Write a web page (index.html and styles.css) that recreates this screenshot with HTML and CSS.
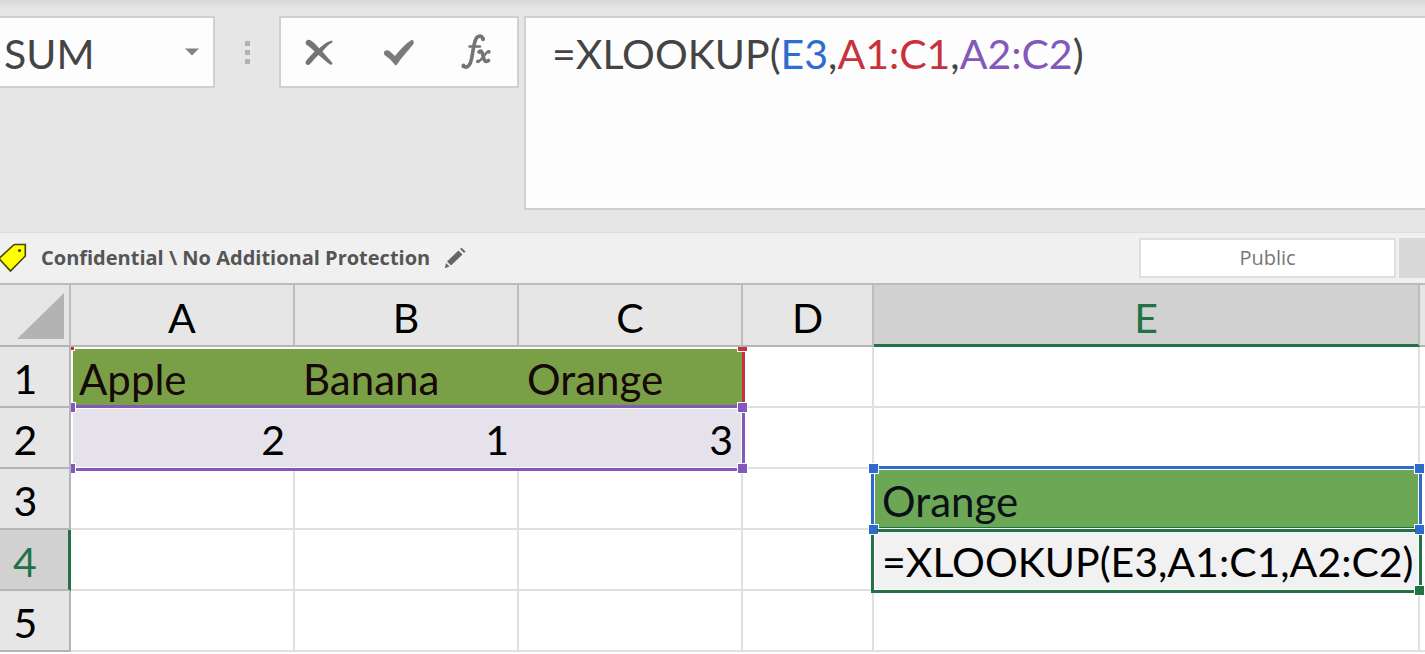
FILE: index.html
```html
<!DOCTYPE html>
<html lang="en">
<head>
<meta charset="utf-8">
<title>XLOOKUP</title>
<link rel="stylesheet" href="styles.css">
</head>
<body>
<header class="formula-bar">
  <div class="name-box">
    <input class="name-input" type="text" value="SUM" aria-label="Name box">
    <button class="name-toggle" type="button" aria-label="Show names">
      <svg width="14" height="8" viewBox="0 0 14 8"><path d="M0 0.5H14L7 7.5Z" fill="#808383"/></svg>
    </button>
  </div>
  <div class="grip" aria-hidden="true"><i></i><i></i><i></i></div>
  <div class="actions">
    <button type="button" aria-label="Cancel">
      <svg width="30" height="28" viewBox="0 0 30 28"><path d="M3.500 2C7 1 11 6 15.300 10.500C19 6.500 24 3.200 28 2.500L28.700 4.300C24.500 6.500 21.500 9.500 18.500 13.500C22.500 18.500 26 21.500 28.700 25.500L27 27C23 24.500 19 20.500 14.500 17C11 20 8.500 23.500 5.500 26.500C3 27.800 .8 26 1.800 23.500C4 20 7.500 17 10.500 13.500C8 10.500 5 8.500 2.200 6.500C1 5 1.800 2.800 3.500 2Z" fill="#747474"/></svg>
    </button>
    <button type="button" aria-label="Enter">
      <svg width="32" height="28" viewBox="0 0 32 28"><path d="M1 14.500C1.500 12 4.500 11.500 6.500 13L12 18C17 12 22 6 28.500 2C30.500 1.500 31 3.500 30.500 6C25 12.500 19 19 14 26.500C13.500 27.500 12 27.500 11.500 26.500C8.500 22 5 19.500 1.500 17C1 16.300 .8 15.500 1 14.500Z" fill="#7b7b7b"/></svg>
    </button>
    <button class="fx" type="button" aria-label="Insert function">
      <svg width="30" height="36" viewBox="0 0 30 36" fill="none" stroke="#747474" stroke-linecap="round"><path d="M22 4.500C20 .8 16 1.500 14.500 6C12.500 11 12 18 10.500 25C9.500 31 6.500 34.500 2.500 32.500" stroke-width="3.600"/><path d="M8.500 12.500H19" stroke-width="2.400"/><path d="M22 5v.2M2.500 31.500v.2" stroke-width="4"/><path d="M18 18C20.500 16 21 18 22 21.500C23 26 24 29 27.500 26.500" stroke-width="3.600"/><path d="M28 17.500C24.500 16.500 21.500 27.500 16.500 27.500" stroke-width="2.400"/><path d="M27.800 17.800v.2M17 27.300v.2" stroke-width="3.600"/></svg>
    </button>
  </div>
  <div class="formula" role="textbox" aria-label="Formula" contenteditable="true" spellcheck="false">=XLOOKUP(<span class="ref-blue">E3</span>,<span class="ref-red">A1:C1</span>,<span class="ref-purple">A2:C2</span>)</div>
</header>

<section class="label-bar" aria-label="Sensitivity">
  <svg class="tag" width="27" height="30" viewBox="0 0 27 30"><path d="M-1 15.500L13 2.500Q14 1.500 15.500 1.500H25.300V13L10.500 28Z" fill="#ff0" stroke="#44440c" stroke-width="1.600"/><circle cx="19.500" cy="7.500" r="1.600" fill="#44440c"/></svg>
  <span class="label-name">Confidential \ No Additional Protection</span>
  <button class="edit" type="button" aria-label="Edit label">
    <svg width="22" height="22" viewBox="0 0 22 22" fill="#666"><path d="M14.500 3.500L18.500 7.500L7 18.500L3 14.500Z"/><path d="M16 2L17.500 .8L21.500 4.500L20 6Z"/><path d="M2 16L5.500 19.500L.8 21.200Z"/></svg>
  </button>
  <div class="label-options">
    <button class="option" type="button">Public</button>
    <button class="option option-next" type="button" aria-label="Next label"></button>
  </div>
</section>

<main class="sheet">
  <table class="cells">
    <colgroup><col class="c-head"><col class="c-wide"><col class="c-wide"><col class="c-wide"><col class="c-mid"><col><col class="c-rest"></colgroup>
    <thead>
      <tr><th class="corner"><svg width="47" height="46" viewBox="0 0 47 46"><path d="M47 0V46H0Z" fill="#b3b3b3"/></svg></th><th>A</th><th>B</th><th>C</th><th>D</th><th class="active">E</th><th></th></tr>
    </thead>
    <tbody>
      <tr><th>1</th><td class="olive">Apple</td><td class="olive">Banana</td><td class="olive">Orange</td><td></td><td></td><td></td></tr>
      <tr><th>2</th><td class="lilac">2</td><td class="lilac">1</td><td class="lilac">3</td><td></td><td></td><td></td></tr>
      <tr><th>3</th><td></td><td></td><td></td><td></td><td class="green">Orange</td><td></td></tr>
      <tr><th class="active">4</th><td></td><td></td><td></td><td></td><td class="editing">=XLOOKUP(E3,A1:C1,A2:C2)</td><td></td></tr>
      <tr><th>5</th><td></td><td></td><td></td><td></td><td></td><td></td></tr>
    </tbody>
  </table>
  <div class="marks" aria-hidden="true">
    <div class="mark mark-red"><i class="tl"></i><i class="tr"></i></div>
    <div class="mark mark-edit"><i class="br"></i></div>
    <div class="mark mark-purple"><i class="tl"></i><i class="tr"></i><i class="bl"></i><i class="br"></i></div>
    <div class="mark mark-blue"><i class="tl"></i><i class="tr"></i><i class="bl"></i><i class="br"></i></div>
  </div>
</main>
</body>
</html>
```
FILE: styles.css
```css
* { box-sizing: border-box; }
body {
  margin: 0;
  background: #fff;
  color: #000;
  font-family: Lato, "Liberation Sans", sans-serif;
  font-size: 41px;
  line-height: 48px;
  overflow: hidden;
}
button { border: 0; padding: 0; background: none; font: inherit; color: inherit; }
svg { display: block; }

/* Formula bar */
.formula-bar {
  display: flex;
  align-items: flex-start;
  padding: 16px 0 22px;
  background: linear-gradient(#d8d8d8, #e6e6e6 10px);
  color: #444;
}
.name-box {
  display: flex;
  width: 215px;
  height: 72px;
  background: #fdfdfd;
  border: 2px solid #d0d0d0;
  border-left: 0;
}
.name-input {
  flex: 1;
  min-width: 0;
  border: 0;
  padding: 4px 0 0 4px;
  background: none;
  font: inherit;
  color: inherit;
  outline: 0;
}
.name-toggle { display: grid; place-items: center; width: 42px; }
.grip {
  display: grid;
  gap: 4px;
  align-content: center;
  justify-content: center;
  width: 64px;
  height: 72px;
}
.grip i { width: 5px; height: 5px; background: #b2b2b2; }
.actions {
  display: grid;
  grid-template-columns: repeat(3, 80px);
  justify-content: center;
  width: 240px;
  height: 72px;
  background: #fdfdfd;
  border: 2px solid #d0d0d0;
}
.actions button { display: grid; place-items: center; }
.actions .fx { padding-right: 6px; }
.formula {
  flex: 1;
  min-width: 0;
  height: 194px;
  margin-left: 5px;
  padding: 12px 26px;
  background: #fdfdfd;
  border: 2px solid #d0d0d0;
  border-right: 0;
  white-space: nowrap;
}
.ref-blue { color: #2f6cd0; }
.ref-red { color: #c8323c; }
.ref-purple { color: #8358bd; }

/* Sensitivity bar */
.label-bar {
  display: flex;
  align-items: center;
  height: 53px;
  background: #f0f0f0;
  border-top: 1px solid #dcdcdc;
  border-bottom: 2px solid #b8bcc2;
  color: #555;
  font: 700 20px/28px "Open Sans", "Noto Sans", sans-serif;
}
.label-name { margin-left: 14px; white-space: nowrap; }
.edit { margin-left: 14px; }
.label-options {
  display: flex;
  gap: 3px;
  height: 40px;
  margin-left: auto;
}
.option {
  width: 257px;
  background: #fff;
  border: 2px solid #dedede;
  color: #777;
  font-weight: 400;
  font-size: 20px;
}
.option-next { width: 26px; background: #d8d8d8; border: 0; }

/* Grid */
.sheet { position: relative; }
.cells {
  width: 100%;
  table-layout: fixed;
  border-spacing: 0;
}
.c-head { width: 71px; }
.c-wide { width: 224px; }
.c-mid { width: 131px; }
.c-rest { width: 5px; }
.cells th, .cells td {
  height: 61px;
  padding: 4px 8px 0;
  border-right: 2px solid #e0e0e0;
  border-bottom: 2px solid #e0e0e0;
  font-weight: 400;
  text-align: left;
  white-space: nowrap;
}
.cells th {
  padding: 4px 0 0;
  background: #e6e6e6;
  border-color: #b5b5b5;
  text-align: center;
}
.cells thead th { height: 62px; padding-top: 5px; border-right-color: #bdbdbd; }
.cells tbody th { padding-right: 18px; }
.cells thead .corner { padding: 2px 0 0 17px; }
.cells th.active { background: #d1d1d1; color: #217346; }
.cells thead .active { padding-top: 6px; border-bottom: 3px solid #217346; }
.cells tbody .active { border-right: 3px solid #217346; }
.cells td:last-child, .cells th:last-child { padding: 0; border-right: 0; }
.cells .olive { background: #7aa047; border-color: #7aa047; color: #180808; font-size: 42px; }
.cells .lilac { background: #e5e2ec; border-color: #e5e2ec; text-align: right; }
.cells .green { background: #6ba755; color: #0c1018; font-size: 42px; }
.cells .editing { background: #f1f1f1; }

/* Range outlines drawn over the grid */
.marks {
  position: absolute;
  inset: 0;
  display: grid;
  grid-template-columns: 71px repeat(3, 224px) 131px 1fr 5px;
  grid-template-rows: 62px repeat(5, 61px);
  overflow: hidden;
  pointer-events: none;
}
.mark {
  --tone: #8358bd;
  position: relative;
  margin: -3px -2px -2px -3px;
  border: 3px solid var(--tone);
  box-shadow: inset 0 0 0 1px #fff;
}
.mark i {
  position: absolute;
  width: 11px;
  height: 11px;
  background: var(--tone);
  border: 1px solid #fff;
}
.mark .tl { left: -6px; top: -6px; }
.mark .tr { right: -6px; top: -6px; }
.mark .bl { left: -6px; bottom: -6px; }
.mark .br { right: -6px; bottom: -6px; }
.mark-red {
  --tone: #c8323c;
  grid-area: 2 / 2 / 3 / 5;
  margin: 0 -2px 0 0;
  border-width: 0 3px 0 0;
  box-shadow: inset 1px 1px 0 1px #fff;
}
.mark-red i { height: 5px; border-top: 0; }
.mark-red .tl { left: 0; top: 0; width: 4px; height: 4px; border-left: 0; }
.mark-red .tr { top: 0; }
.mark-purple { grid-area: 3 / 2 / 4 / 5; margin-left: 0; border-left: 0; box-shadow: inset 2px 1px 0 #fff, inset -1px -1px 0 #fff; }
.mark-purple .tl, .mark-purple .bl { left: 0; width: 5px; border-left: 0; }
.mark-blue { --tone: #2f6bcb; grid-area: 4 / 6 / 5 / 7; }
.mark-blue::after {
  content: "";
  position: absolute;
  left: 3px;
  right: 3px;
  bottom: -3px;
  height: 3px;
  background: #217346;
}
.mark-edit { --tone: #217346; grid-area: 5 / 6 / 6 / 7; }
```
